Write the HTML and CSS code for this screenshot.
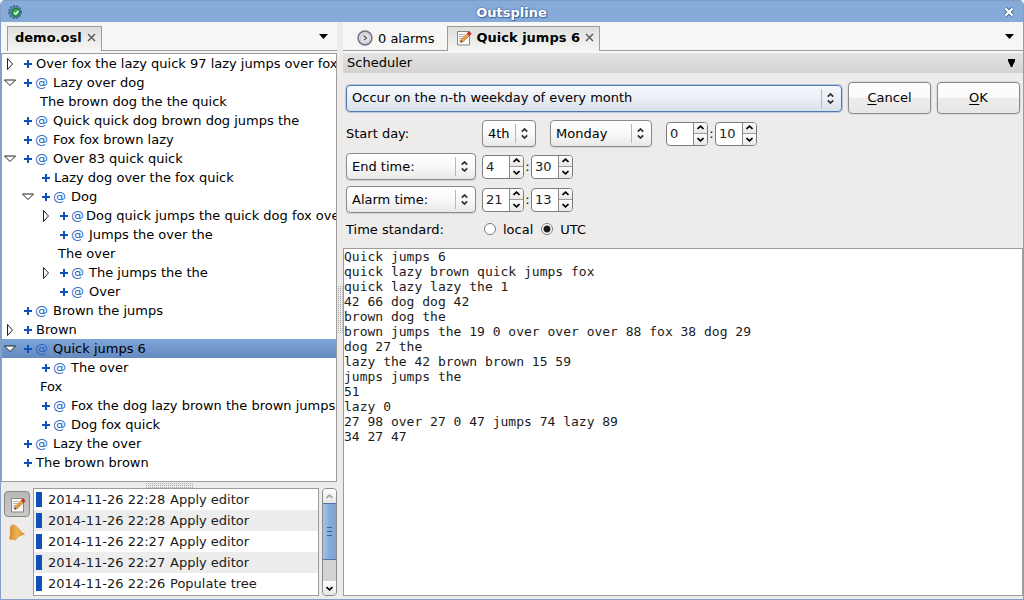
FILE: index.html
```html
<!DOCTYPE html>
<html lang="en">
<head>
<meta charset="utf-8">
<title>Outspline</title>
<link rel="stylesheet" href="styles.css">
</head>
<body>
<svg class="defs" aria-hidden="true">
  <defs>
    <linearGradient id="pencil-fill" x1="0" y1="0" x2="1" y2="1"><stop offset="0" stop-color="#fbc36a"/><stop offset="1" stop-color="#d97a10"/></linearGradient>
    <linearGradient id="bell-fill" x1="0" y1="0" x2="1" y2="0"><stop offset="0" stop-color="#d98a28"/><stop offset=".5" stop-color="#f2b450"/><stop offset="1" stop-color="#dd8f2c"/></linearGradient>
    <symbol id="right" viewBox="0 0 10 14"><path d="M2.5 1.5v11L7.500 7z" fill="#fff" stroke="#222"/></symbol>
    <symbol id="down" viewBox="0 0 12 8"><path d="M.5 1h11L6 6.500z" fill="#fff" stroke="#222"/></symbol>
    <symbol id="plus" viewBox="0 0 12 12"><path d="M6 2v8M2 6h8" stroke="#0f51b8" stroke-width="2" fill="none"/></symbol>
    <symbol id="note" viewBox="0 0 16 16">
      <path d="M1.500 1.500h12v13.500h-12z" fill="#fafafa" stroke="#85857e"/>
      <path d="M3 4.500h6M3 6.500h5M3 8.500h3M3 10.500h2" stroke="#b4b4b0"/>
      <path d="M4.500 12.500l.8-3 6.200-6.200 2 2-6.200 6.200z" fill="url(#pencil-fill)" stroke="#a8601a" stroke-width=".6"/>
      <path d="M4.500 12.500l.6-2 1.400 1.300z" fill="#333"/>
      <path d="M11.300 3.400l1-1.200c1-1 3.300 1 2.500 2.100l-1.200 1.200z" fill="#dc2b26" stroke="#a01515" stroke-width=".5"/>
    </symbol>
    <symbol id="combo" viewBox="0 0 7 11"><path d="M.8 3.700L3.500 1l2.700 2.700M.8 7.300L3.500 10l2.700-2.700" fill="none" stroke="#2a2e2e" stroke-width="1.700"/></symbol>
    <symbol id="up-arrow" viewBox="0 0 7 5"><path d="M.5 4L3.500 1.200 6.500 4" fill="none" stroke="currentColor" stroke-width="1.700"/></symbol>
    <symbol id="down-arrow" viewBox="0 0 7 5"><path d="M.5 1L3.500 3.800 6.500 1" fill="none" stroke="currentColor" stroke-width="1.700"/></symbol>
    <symbol id="close" viewBox="0 0 9 9"><path d="M1 1l7 7M8 1L1 8" stroke="#555" stroke-width="1.400"/></symbol>
    <symbol id="menu" viewBox="0 0 9 5"><path d="M0 0h9L4.500 5z"/></symbol>
  </defs>
</svg>
<div class="window">
  <header class="titlebar">
    <svg class="app-icon" viewBox="0 0 16 16"><circle cx="8" cy="8" r="5.800" fill="#4d7c9a" stroke="#3f6a90" stroke-width="2.400" stroke-dasharray="2 1.100"/><circle cx="8" cy="8" r="5.600" fill="#56809a"/><circle cx="9" cy="8.500" r="4" fill="#35a852" stroke="#1c7544"/><path d="M7 8.500l1.700 1.700 2.800-3.500" fill="none" stroke="#e8fff0" stroke-width="1.500"/></svg>
    <h1 class="title">Outspline</h1>
    <button class="plain close-window" aria-label="Close window"><svg width="10" height="10" viewBox="0 0 10 10"><path d="M1.500 1.500l7 7M8.500 1.500l-7 7" stroke="#3f6599" stroke-width="4"/><path d="M1.500 1.500l7 7M8.500 1.500l-7 7" stroke="#fff" stroke-width="2.300"/></svg></button>
  </header>
  <main class="panes">
    <section class="left">
      <nav class="tabs">
        <div class="tab active file-tab"><button class="plain">demo.osl</button><button class="plain" aria-label="Close demo.osl"><svg width="9" height="9"><use href="#close"/></svg></button></div>
        <div class="tab-fill"><button class="plain" aria-label="List databases"><svg width="9" height="5"><use href="#menu"/></svg></button></div>
      </nav>
      <ul class="tree" role="tree" id="tree"></ul>
      <div class="sash horizontal"></div>
      <div class="history">
        <div class="filters">
          <button class="filter on" aria-label="Edits"><svg width="16" height="16"><use href="#note"/></svg></button>
          <button class="filter" aria-label="Alarms"><svg width="18" height="18" viewBox="0 0 18 18"><path d="M3.500 1.500c2-1.500 5 .5 6.500 2.500 2 2.800 3 4.500 6.500 6-2.500 1-5.500 2-7.500 3.500-1 3-3 3-4 1.500l-3 .5c-1-1 .3-3 .3-6 0-2.500-.3-6.500 1.200-8z" fill="url(#bell-fill)" stroke="#c98330" stroke-width=".6"/></svg></button>
        </div>
        <div class="log">
          <table>
            <tbody>
              <tr><td><span class="mark"></span></td><td>2014-11-26 22:28</td><td>Apply editor</td></tr>
              <tr><td><span class="mark"></span></td><td>2014-11-26 22:28</td><td>Apply editor</td></tr>
              <tr><td><span class="mark"></span></td><td>2014-11-26 22:27</td><td>Apply editor</td></tr>
              <tr><td><span class="mark"></span></td><td>2014-11-26 22:27</td><td>Apply editor</td></tr>
              <tr><td><span class="mark"></span></td><td>2014-11-26 22:26</td><td>Populate tree</td></tr>
            </tbody>
          </table>
        </div>
        <div class="scrollbar">
          <button class="scroll-end dim" aria-label="Scroll up"><svg width="7" height="5"><use href="#up-arrow"/></svg></button>
          <div class="thumb"></div>
          <div class="track"></div>
          <button class="scroll-end" aria-label="Scroll down"><svg width="7" height="5"><use href="#down-arrow"/></svg></button>
        </div>
      </div>
    </section>
    <div class="sash vertical"></div>
    <section class="right">
      <nav class="tabs">
        <div class="tab alarms-tab"><svg width="16" height="16" viewBox="0 0 16 16"><circle cx="8" cy="8" r="6.900" fill="#eeeef2" stroke="#777489" stroke-width="1.600"/><circle cx="8" cy="8" r="5" fill="#e2e2e4" stroke="#c4c2cf"/><path d="M6.500 5.500L9.500 8 7 10" fill="none" stroke="#555" stroke-width="1.100"/></svg><button class="plain">0 alarms</button></div>
        <div class="tab active editor-tab"><svg width="16" height="16"><use href="#note"/></svg><button class="plain">Quick jumps 6</button><button class="plain" aria-label="Close Quick jumps 6"><svg width="9" height="9"><use href="#close"/></svg></button></div>
        <div class="tab-fill"><button class="plain" aria-label="List tabs"><svg width="9" height="5"><use href="#menu"/></svg></button></div>
      </nav>
      <button class="section-bar"><span>Scheduler</span><svg width="7" height="8" viewBox="0 0 7 8"><path d="M0 0h7v2L4.500 7v1h-2V7L0 2z"/></svg></button>
      <form class="scheduler">
        <div class="row">
          <span class="combo focus grow"><select aria-label="Recurrence"><option>Occur on the n-th weekday of every month</option></select><svg width="7" height="11"><use href="#combo"/></svg></span>
          <button class="button" type="button"><span><u>C</u>ancel</span></button>
          <button class="button" type="button"><span><u>O</u>K</span></button>
        </div>
        <div class="row">
          <label class="name" for="ordinal">Start day:</label>
          <span class="combo ordinal"><select id="ordinal"><option>4th</option></select><svg width="7" height="11"><use href="#combo"/></svg></span>
          <span class="combo weekday"><select aria-label="Weekday"><option>Monday</option></select><svg width="7" height="11"><use href="#combo"/></svg></span>
          <span class="time" data-hour="0" data-minute="10" data-name="Start"></span>
        </div>
        <div class="row">
          <span class="combo name"><select aria-label="End"><option>End time:</option></select><svg width="7" height="11"><use href="#combo"/></svg></span>
          <span class="time" data-hour="4" data-minute="30" data-name="End"></span>
        </div>
        <div class="row">
          <span class="combo name"><select aria-label="Alarm"><option>Alarm time:</option></select><svg width="7" height="11"><use href="#combo"/></svg></span>
          <span class="time" data-hour="21" data-minute="13" data-name="Alarm"></span>
        </div>
        <div class="row standard">
          <span class="name">Time standard:</span>
          <label class="radio"><input type="radio" name="standard">local</label>
          <label class="radio"><input type="radio" name="standard" checked>UTC</label>
        </div>
      </form>
      <textarea class="editor" aria-label="Text" spellcheck="false">Quick jumps 6
quick lazy brown quick jumps fox
quick lazy lazy the 1
42 66 dog dog 42
brown dog the
brown jumps the 19 0 over over over 88 fox 38 dog 29
dog 27 the
lazy the 42 brown brown 15 59
jumps jumps the
51
lazy 0
27 98 over 27 0 47 jumps 74 lazy 89
34 27 47</textarea>
    </section>
  </main>
</div>
<script src="app.js"></script>
</body>
</html>
```
FILE: styles.css
```css
* { box-sizing: border-box; }
html, body { height: 100%; }
body { margin: 0; font: 13px/19px "DejaVu Sans", sans-serif; color: #000; background: #fff; }
button, input, select, textarea { font: inherit; color: inherit; margin: 0; }
button { padding: 0; }
svg { display: block; flex: none; }
.defs { position: absolute; width: 0; height: 0; }
.plain { border: 0; background: none; }

.window { height: 100vh; display: flex; flex-direction: column; background: #edeceb; border: solid #869fc6; border-width: 0 1px 1px; border-radius: 5px 5px 0 0; overflow: hidden; }
.titlebar { flex: none; height: 22px; display: flex; align-items: center; padding: 0 9px 0 6px; background: #86abd9; border-top: 1px solid #7d9cc6; }
.app-icon { width: 16px; height: 16px; }
.title { flex: 1; margin: 0; padding: 1px 4px 0 0; text-align: center; font-size: 13px; color: #fff; text-shadow: 0 0 2px #2c5288, 1px 1px 1px #40669c; }

.panes { flex: 1; min-height: 0; display: grid; grid-template-columns: minmax(0, 336fr) 6px minmax(0, 680fr); padding-bottom: 3px; }
.left, .right { display: flex; flex-direction: column; min-height: 0; }

.tabs { flex: none; display: flex; height: 31px; padding: 4px 0 2px; background: #f6f6f4; }
.tab { display: flex; align-items: center; gap: 5px; padding-bottom: 2px; border-bottom: 1px solid #9d9c9a; }
.tab.active { padding-bottom: 3px; border: 1px solid #9d9c9a; border-bottom: 0; font-weight: bold; background: linear-gradient(#dededc, #f6f6f4); }
.file-tab { margin-left: 6px; padding: 0 5px 0 7px; }
.alarms-tab { padding: 0 12px 0 14px; }
.editor-tab { padding: 0 5px 0 8px; }
.tab-fill { flex: 1; display: flex; justify-content: flex-end; align-items: center; padding: 0 9px 4px; border-bottom: 1px solid #9d9c9a; }

.tree { flex: 1; min-height: 0; margin: 0; padding: 0; list-style: none; overflow: hidden; background: #fff; border: 1px solid #9d9c9a; }
.node { display: flex; align-items: center; height: 19px; white-space: nowrap; }
.node.selected { background: linear-gradient(#7fa6d7, #6389bf); }
.indent { flex: none; width: 18px; }
.twisty { flex: none; display: flex; justify-content: center; width: 16px; margin-right: 4px; }
.at { width: 17px; padding-left: 1px; color: #2a66c4; }
.marked { padding-left: 2px; }

.sash { display: flex; align-items: center; justify-content: center; }
.sash::before { content: ""; background: repeating-linear-gradient(90deg, transparent 0 1px, #edeceb 1px 2px), repeating-linear-gradient(#a9a8a6 0 1px, transparent 1px 2px); }
.horizontal { flex: none; height: 6px; }
.horizontal::before { width: 47px; height: 5px; }
.vertical::before { width: 5px; height: 47px; }

.history { flex: none; display: flex; height: 108px; }
.filters { width: 32px; padding: 3px 3px 0; display: flex; flex-direction: column; gap: 3px; }
.filter { display: grid; place-items: center; width: 26px; height: 26px; border: 1px solid transparent; border-radius: 4px; background: none; }
.filter.on { padding: 2px 0 0 2px; border-color: #8a8886; background: linear-gradient(#b9b8b6, #cbcac8); }
.log { flex: 1; border: 1px solid #9d9c9a; background: #fff; color: #1a1a1a; overflow: hidden; }
.log table { width: 100%; border-collapse: collapse; white-space: nowrap; }
.log tr:nth-child(even) { background: #ededed; }
.log td { height: 21px; padding: 0; line-height: 21px; }
.log td:first-child { width: 14px; padding-left: 2px; }
.log td:nth-child(2) { width: 122px; }
.mark { display: block; width: 6px; height: 15px; background: #0f51b8; }
.scrollbar { display: flex; flex-direction: column; width: 15px; margin-left: 3px; border-radius: 4px; border: 1px solid #8c8a88; background: #d4d3d1; overflow: hidden; }
.scroll-end { flex: none; display: grid; place-items: center; height: 14px; border: 0; background: linear-gradient(#fff, #e6e5e3); }
.scroll-end.dim { color: #a5a4a2; }
.thumb { flex: 57; background: repeating-linear-gradient(#3f6291 0 1px, transparent 1px 4px) center / 5px 9px no-repeat, linear-gradient(90deg, #a5c3ea, #86abd9 50%, #7ea2d2); border: solid #4f76ab; border-width: 1px 0; }
.track { flex: 22; }

.section-bar { flex: none; display: flex; align-items: center; justify-content: space-between; height: 20px; padding: 0 8px 1px 4px; border: 0; background: linear-gradient(#e3e3e1, #d3d2d0); }
.scheduler { flex: none; display: flex; flex-direction: column; gap: 6px; padding: 9px 3px; }
.row { display: flex; align-items: center; gap: 6px; }
.name { flex: none; width: 130px; }
.combo { display: grid; height: 27px; align-items: center; }
.combo > * { grid-area: 1 / 1; }
.combo select { appearance: none; width: 100%; height: 27px; padding: 0 20px 1px 5px; border: 1px solid #8c8a88; border-radius: 4px; background: linear-gradient(#b9b8b6, #b9b8b6) right 19px center / 1px 19px no-repeat, linear-gradient(#fff, #f9f9f9 50%, #e9e8e7); box-shadow: 0 1px 1px #d5d4d2; }
.combo svg { justify-self: end; margin-right: 8px; pointer-events: none; }
.combo.focus select { border-color: #5179ad; background: linear-gradient(#b9b8b6, #b9b8b6) right 19px center / 1px 19px no-repeat, linear-gradient(#f6f9fd, #eaeff6 50%, #d9dfe8); box-shadow: 0 0 0 1px #b3c8e3; }
.grow { flex: 1; }
.button { width: 83px; height: 32px; padding-bottom: 1px; border: 1px solid #8c8a88; border-radius: 4px; background: linear-gradient(#fff, #fafafa 50%, #eeedec 50%, #e7e6e5); box-shadow: 0 0 0 1px #dddcda; }
.button u { text-underline-offset: 2px; }
.ordinal { width: 54px; }
.weekday { width: 102px; margin: 0 8px; }
.time { display: flex; align-items: center; }
.colon { width: 7px; text-align: center; }
.spin { display: flex; width: 42px; height: 24px; border: 1px solid #7e7c7a; border-radius: 4px; background: #fff; overflow: hidden; }
.spin input { flex: 1; min-width: 0; padding: 0 0 0 3px; border: 0; background: none; outline: 0; color: #222; }
.spin-buttons { display: flex; flex-direction: column; width: 14px; border-left: 1px solid #8c8a88; }
.spin-buttons button { flex: 1; display: grid; place-items: center; border: 0; background: linear-gradient(#fdfdfd, #e9e8e7); }
.spin-buttons button + button { border-top: 1px solid #9d9c9a; }
.standard { height: 20px; gap: 8px; }
.radio { display: flex; align-items: center; gap: 7px; }
.radio input { appearance: none; width: 12px; height: 12px; border: 1px solid #7e7c7a; border-radius: 50%; background: #fff; }
.radio input:checked { background: radial-gradient(circle, #1a1a1a 0 3px, #fff 4px); }
.editor { flex: 1; min-height: 0; width: 100%; padding: 0; resize: none; outline: 0; border: 1px solid #9d9c9a; background: #fff; color: #1a1a1a; font: 13px/15px "DejaVu Sans Mono", monospace; }
```
FILE: app.js
```js
// Each entry: depth, expander state ("r", "d" or ""), markers, text
const nodes = [
  [0, "r", "+", "Over fox the lazy quick 97 lazy jumps over fox"],
  [0, "d", "+@", "Lazy over dog"],
  [1, "", "", "The brown dog the the quick"],
  [0, "", "+@", "Quick quick dog brown dog jumps the"],
  [0, "", "+@", "Fox fox brown lazy"],
  [0, "d", "+@", "Over 83 quick quick"],
  [1, "", "+", "Lazy dog over the fox quick"],
  [1, "d", "+@", "Dog"],
  [2, "r", "+@", "Dog quick jumps the quick dog fox ove"],
  [2, "", "+@", "Jumps the over the"],
  [2, "", "", "The over"],
  [2, "r", "+@", "The jumps the the"],
  [2, "", "+@", "Over"],
  [0, "", "+@", "Brown the jumps"],
  [0, "r", "+", "Brown"],
  [0, "d", "+@", "Quick jumps 6"],
  [1, "", "+@", "The over"],
  [1, "", "", "Fox"],
  [1, "", "+@", "Fox the dog lazy brown the brown jumps"],
  [1, "", "+@", "Dog fox quick"],
  [0, "", "+@", "Lazy the over"],
  [0, "", "+", "The brown brown"]
];
const icon = (id, w, h) => `<svg width="${w}" height="${h}"><use href="#${id}"/></svg>`;
document.getElementById("tree").innerHTML = nodes.map(([depth, state, marks, text], i) =>
  `<li role="treeitem" class="node${i === 15 ? " selected" : ""}">` +
  '<span class="indent"></span>'.repeat(depth) +
  `<span class="twisty">${state === "r" ? icon("right", 10, 14) : state === "d" ? icon("down", 12, 8) : ""}</span>` +
  (marks.includes("+") ? icon("plus", 12, 12) : "") +
  (marks.includes("@") ? '<span class="at">@</span>' : "") +
  `<span${marks ? ' class="marked"' : ""}>${text}</span></li>`).join("");

const spin = (value, name) =>
  `<span class="spin"><input type="text" value="${value}" aria-label="${name}">` +
  `<span class="spin-buttons"><button type="button" aria-label="Increase">${icon("up-arrow", 7, 5)}</button>` +
  `<button type="button" aria-label="Decrease">${icon("down-arrow", 7, 5)}</button></span></span>`;
for (const el of document.querySelectorAll(".time")) {
  const { hour, minute, name } = el.dataset;
  el.innerHTML = spin(hour, name + " hour") + '<span class="colon">:</span>' + spin(minute, name + " minute");
}
```
